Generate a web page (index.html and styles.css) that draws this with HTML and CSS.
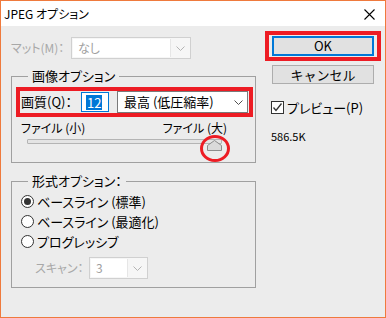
FILE: index.html
```html
<!DOCTYPE html>
<html lang="ja">
<head>
    <meta charset="UTF-8">
    <title>JPEG オプション</title>
    <link rel="stylesheet" href="styles.css">
</head>
<body>
    <div class="window">
        <div class="titlebar">
            <span class="title">JPEG オプション</span>
            <svg class="close" width="11" height="11" viewBox="0 0 11 11">
                <path d="M0.5 0.5 L10.5 10.5 M10.5 0.5 L0.5 10.5" stroke="#000" stroke-width="1.1" fill="none"/>
            </svg>
        </div>

        <div class="content">
            <div class="main">
                <!-- マット -->
                <div class="matte-row">
                    <span class="field-label disabled">マット(M)：</span>
                    <div class="select is-disabled matte-select">
                        <span class="value">なし</span>
                        <span class="arrow">
                            <svg width="9" height="5" viewBox="0 0 9 5"><path d="M0.5 0.5 L4.5 4.5 L8.5 0.5" stroke="#b4b4b4" fill="none"/></svg>
                        </span>
                    </div>
                </div>

                <!-- 画像オプション -->
                <fieldset class="group image-group">
                    <legend>画像オプション</legend>
                    <div class="quality-row">
                        <span class="field-label">画質(Q)：</span>
                        <div class="num-input"><span class="sel">12</span></div>
                        <div class="select quality-select">
                            <span class="value">最高 (低圧縮率)</span>
                            <span class="arrow">
                                <svg width="9" height="5" viewBox="0 0 9 5"><path d="M0.5 0.5 L4.5 4.5 L8.5 0.5" stroke="#505050" fill="none"/></svg>
                            </span>
                        </div>
                    </div>
                    <div class="size-labels">
                        <span>ファイル (小)</span>
                        <span>ファイル (大)</span>
                    </div>
                    <div class="slider">
                        <div class="track"></div>
                        <svg class="thumb" width="15" height="11" viewBox="0 0 15 11">
                            <path d="M7.5 0.5 L14.5 5.5 L14.5 10.5 L0.5 10.5 L0.5 5.5 Z" fill="#dadada" stroke="#8c8c8c"/>
                        </svg>
                        <div class="circle-mark"></div>
                    </div>
                </fieldset>

                <!-- 形式オプション -->
                <fieldset class="group format-group">
                    <legend>形式オプション：</legend>
                    <div class="radio-list">
                        <div class="radio-row"><span class="radio checked"></span>ベースライン (標準)</div>
                        <div class="radio-row"><span class="radio"></span>ベースライン (最適化)</div>
                        <div class="radio-row"><span class="radio"></span>プログレッシブ</div>
                    </div>
                    <div class="scan-row">
                        <span class="field-label disabled">スキャン：</span>
                        <div class="select is-disabled scan-select">
                            <span class="value">3</span>
                            <span class="arrow">
                                <svg width="9" height="5" viewBox="0 0 9 5"><path d="M0.5 0.5 L4.5 4.5 L8.5 0.5" stroke="#b4b4b4" fill="none"/></svg>
                            </span>
                        </div>
                    </div>
                </fieldset>
            </div>

            <div class="side">
                <div class="ok-mark">
                    <button class="btn ok">OK</button>
                </div>
                <button class="btn cancel">キャンセル</button>
                <div class="check-row">
                    <span class="checkbox">
                        <svg width="11" height="11" viewBox="0 0 11 11"><path d="M1.5 5.5 L4 8.5 L9.5 1.5" stroke="#333" stroke-width="1.3" fill="none"/></svg>
                    </span>
                    プレビュー(P)
                </div>
                <div class="file-size">586.5K</div>
            </div>
        </div>
    </div>
</body>
</html>
```

FILE: styles.css
```css
/* 全体 */
body {
    margin: 0;
    font-family: "Noto Sans CJK JP", sans-serif;
    font-size: 12px;
    font-feature-settings: "palt";
    color: #000;
}

/* ウィンドウ枠 */
.window {
    width: 384px;
    height: 316px;
    border: 1px solid #ef7a3d;
    background-color: #ececec;
    display: flex;
    flex-direction: column;
}

.titlebar {
    height: 25px;
    background-color: #fff;
    display: flex;
    align-items: center;
    padding-left: 3px;
    padding-right: 10px;
}

.close {
    margin-left: auto;
    margin-top: 1px;
}

.content {
    display: flex;
    padding-left: 10px;
}

.main {
    width: 245px;
}

.side {
    width: 116px;
    margin-left: 9px;
}

.field-label {
    line-height: 16px;
}

.disabled {
    color: #a8a8a8;
}

/* セレクトボックス */
.select {
    box-sizing: border-box;
    display: flex;
    align-items: center;
    background-color: #fff;
    border: 1px solid #7a7a7a;
}

.select .value {
    flex: 1;
    line-height: 16px;
}

.select .arrow {
    width: 18px;
    display: flex;
    justify-content: center;
}

.select.is-disabled {
    border-color: #d0d0d0;
    background-color: #f6f6f6;
    color: #a0a0a0;
    padding: 1px;
}

.select.is-disabled .value {
    align-self: stretch;
    background-color: #fff;
    border-right: 1px solid #e6e6e6;
    padding-left: 5px;
    display: flex;
    align-items: center;
}

/* マット行 */
.matte-row {
    margin-top: 11px;
    height: 22px;
    display: flex;
    align-items: center;
}

.matte-row .field-label {
    width: 60px;
}

.matte-select {
    width: 120px;
    height: 22px;
}

/* グループ枠 */
.group {
    margin: 0;
    border: 1px solid #a0a0a0;
    min-width: 0;
}

.group legend {
    padding: 0 4px;
    margin-left: 8px;
    line-height: 16px;
    font-size: 13px;
}

.image-group {
    margin-top: 9px;
    padding: 0 6px 9px 8px;
}

.format-group {
    margin-top: 10px;
    padding: 0 6px 8px 8px;
}

/* 画質 */
.quality-row {
    margin-top: 7px;
    height: 22px;
    display: flex;
    align-items: center;
    padding-left: 1px;
    outline: 4px solid #ed1c24;
    font-size: 13px;
}

.quality-row .field-label {
    width: 60px;
}

.num-input {
    box-sizing: border-box;
    width: 28px;
    height: 20px;
    border: 1px solid #0078d7;
    background-color: #fff;
    padding-left: 4px;
    display: flex;
    align-items: center;
}

.num-input .sel {
    background-color: #0078d7;
    color: #fff;
    line-height: 15px;
    padding: 0 1px;
}

.quality-select {
    margin-left: 8px;
    width: 131px;
    height: 22px;
    padding-left: 6px;
}

.size-labels {
    margin-top: 8px;
    display: flex;
    justify-content: space-between;
    padding-left: 1px;
    padding-right: 22px;
    line-height: 14px;
}

/* スライダー */
.slider {
    position: relative;
    height: 14px;
}

.track {
    box-sizing: border-box;
    margin-left: 7px;
    margin-top: 4px;
    width: 195px;
    height: 5px;
    border: 1px solid #b4b4b4;
    border-radius: 1px;
    background-color: #e4e4e4;
}

.thumb {
    position: absolute;
    left: 187px;
    top: 1px;
}

.circle-mark {
    position: absolute;
    left: 180px;
    top: -4px;
    box-sizing: border-box;
    width: 30px;
    height: 27px;
    border: 3px solid #ed1c24;
    border-radius: 50%;
}

/* ラジオ */
.radio-list {
    margin-top: 2px;
}

.radio-row {
    height: 20px;
    display: flex;
    align-items: center;
    padding-left: 1px;
    font-size: 13px;
}

.radio {
    box-sizing: border-box;
    width: 13px;
    height: 13px;
    border: 1px solid #333;
    border-radius: 50%;
    background-color: #fff;
    margin-right: 3px;
    display: flex;
    align-items: center;
    justify-content: center;
}

.radio.checked::after {
    content: "";
    width: 7px;
    height: 7px;
    border-radius: 50%;
    background-color: #333;
}

.scan-row {
    margin-top: 6px;
    height: 22px;
    display: flex;
    align-items: center;
    padding-left: 15px;
}

.scan-row .field-label {
    width: 54px;
}

.scan-select {
    width: 59px;
    height: 22px;
}

/* 右側のボタン類 */
.btn {
    box-sizing: border-box;
    width: 102px;
    height: 20px;
    border: 1px solid #adadad;
    background-color: #e1e1e1;
    font-family: inherit;
    font-size: 13px;
    padding: 0;
    line-height: 16px;
    display: block;
}

.ok-mark {
    box-sizing: border-box;
    margin-top: 5px;
    width: 116px;
    border: 4px solid #ed1c24;
    padding: 1px 3px;
}

.ok {
    border: 2px solid #0078d7;
}

.cancel {
    margin-top: 4px;
    margin-left: 7px;
    height: 19px;
}

.check-row {
    margin-top: 16px;
    margin-left: 6px;
    height: 14px;
    display: flex;
    align-items: center;
    font-size: 13px;
}

.checkbox {
    box-sizing: border-box;
    width: 13px;
    height: 13px;
    border: 1px solid #333;
    background-color: #fff;
    margin-right: 3px;
    display: flex;
    align-items: center;
    justify-content: center;
}

.file-size {
    margin-top: 15px;
    margin-left: 6px;
    font-size: 11px;
    line-height: 14px;
}
```
